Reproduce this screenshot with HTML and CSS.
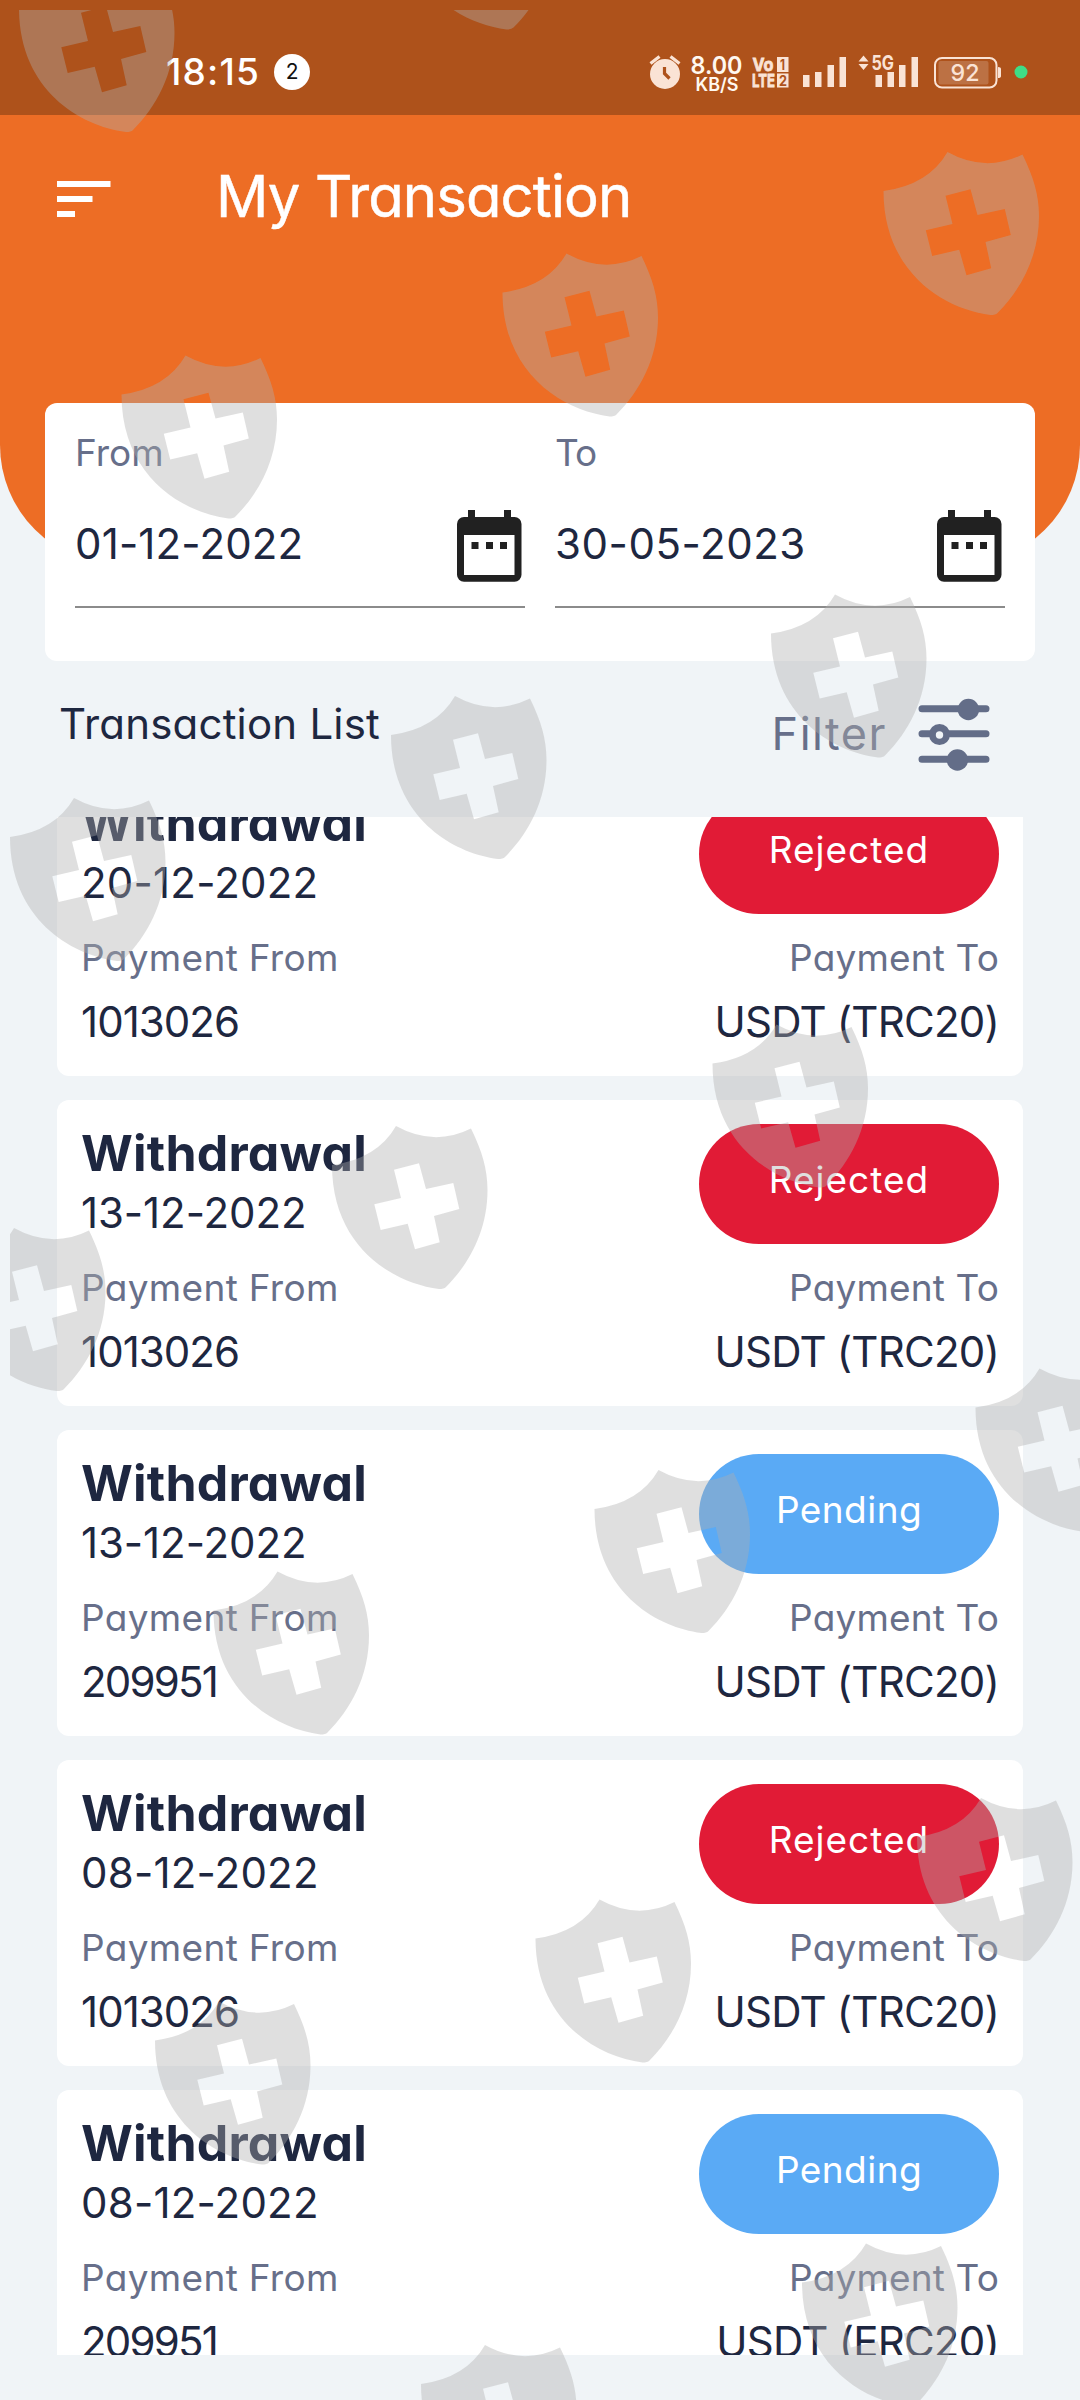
FILE: index.html
```
<!DOCTYPE html>
<html lang="en">
<head>
<meta charset="utf-8">
<title>My Transaction</title>
<link rel="stylesheet" href="styles.css">
</head>
<body>
<div class="screen">
  <header class="hero">
    <div class="status">
      <span class="clock">18:15</span>
      <span class="badge">2</span>
      <svg class="status-icons" width="380" height="60" viewBox="648 42 380 60" fill="#fae3d5">
        <circle cx="665" cy="74" r="15"/>
        <path d="M650.500 63.500l9-7M679.500 63.500l-9-7" stroke="#fae3d5" stroke-width="3.200"/>
        <path d="M664.500 67v6.500l5 5" fill="none" stroke="#ae521b" stroke-width="3.200"/>
        <g fill="#fff8f0" font-weight="600">
          <text x="690.500" y="73.600" font-size="24" textLength="52" lengthAdjust="spacingAndGlyphs">8.00</text>
          <text x="695.500" y="90.500" font-size="18" textLength="43" lengthAdjust="spacingAndGlyphs">KB/S</text>
        </g>
        <g font-weight="700">
          <g stroke="#fae3d5" stroke-width=".8">
            <text x="752.500" y="70.700" font-size="18" textLength="21" lengthAdjust="spacingAndGlyphs">Vo</text>
            <text x="752" y="86.700" font-size="18" textLength="23" lengthAdjust="spacingAndGlyphs">LTE</text>
          </g>
          <path d="M777 57h11.500v15H777zM777 73.500h11.500v14H777z"/>
          <g fill="#ae521b">
            <text x="780" y="69.500" font-size="14" textLength="5" lengthAdjust="spacingAndGlyphs">1</text>
            <text x="779" y="85.500" font-size="14" textLength="8" lengthAdjust="spacingAndGlyphs">2</text>
          </g>
          <text x="871.500" y="69.700" font-size="20" textLength="22.500" lengthAdjust="spacingAndGlyphs">5G</text>
        </g>
        <path d="M803 75h6.500v12H803zM815 72h6.500v15H815zM827.500 65h6.500v22h-6.500zM839.500 57h6.500v30h-6.500z"/>
        <path d="M875.500 75h6.500v12h-6.500zM887.500 72h6.500v15h-6.500zM899 65h6.500v22H899zM911.500 57h6.500v30h-6.500z"/>
        <path d="M863.500 55.500l5 6h-10zM863.500 70l5-6h-10z"/>
        <rect x="938.500" y="61" width="50" height="23.500" rx="2" fill="#fff" fill-opacity=".18"/>
        <rect x="935" y="58" width="61.500" height="29.500" rx="7" fill="none" stroke="#fae3d5" stroke-width="2"/>
        <path d="M998 67q3 0 3 2v7q0 2-3 2z"/>
        <text x="950.500" y="81.300" font-size="23" font-weight="500" textLength="29" lengthAdjust="spacingAndGlyphs">92</text>
        <circle cx="1021" cy="72" r="6.500" fill="#3fdd86"/>
      </svg>
    </div>
    <div class="appbar">
      <svg class="menu" width="54" height="36" viewBox="0 0 54 36" fill="#fff"><path d="M0 0h53.500v6H0zM0 15h35.500v6H0zM0 30h18v6H0z"/></svg>
      <h1 class="title">My Transaction</h1>
    </div>
  </header>

  <section class="range">
    <div class="field">
      <span class="field-label">From</span>
      <div class="field-row">
        <span class="from-date">01-12-2022</span>
        <svg class="calendar" width="65" height="72" viewBox="0 0 65 72"><path fill="#212121" fill-rule="evenodd" d="M11 0h7v7h29V0h7v7h3.500a7 7 0 0 1 7 7v50.700a7 7 0 0 1-7 7H7a7 7 0 0 1-7-7V14a7 7 0 0 1 7-7h4zM7 25v40h50.500V25zM14.500 32h7v7h-7zM29 32h7v7h-7zM43 32h7v7h-7z"/></svg>
      </div>
    </div>
    <div class="field">
      <span class="field-label to">To</span>
      <div class="field-row">
        <span class="to-date">30-05-2023</span>
        <svg class="calendar" width="65" height="72" viewBox="0 0 65 72"><path fill="#212121" fill-rule="evenodd" d="M11 0h7v7h29V0h7v7h3.500a7 7 0 0 1 7 7v50.700a7 7 0 0 1-7 7H7a7 7 0 0 1-7-7V14a7 7 0 0 1 7-7h4zM7 25v40h50.500V25zM14.500 32h7v7h-7zM29 32h7v7h-7zM43 32h7v7h-7z"/></svg>
      </div>
    </div>
  </section>

  <div class="list-head">
    <h2 class="list-title">Transaction List</h2>
    <div class="filter">
      <span>Filter</span>
      <svg width="72" height="76" viewBox="918 696 72 76" fill="#636d88">
        <path d="M922 708.700h64M922 733.700h64M922 759.300h64" stroke="#636d88" stroke-width="7" stroke-linecap="round"/>
        <circle cx="968.400" cy="709.500" r="10.700"/><circle cx="939.500" cy="734.500" r="10.500"/><circle cx="957.400" cy="760" r="10.700"/>
        <circle cx="939.500" cy="735" r="3.700" fill="#f0f4f7"/>
      </svg>
    </div>
  </div>

  <main class="list">
    <article class="card">
      <div class="col"><h3 class="kind">Withdrawal</h3><span class="date">20-12-2022</span><span class="label">Payment From</span><span class="value account">1013026</span></div>
      <div class="col end"><span class="pill rejected">Rejected</span><span class="label">Payment To</span><span class="value method">USDT (TRC20)</span></div>
    </article>
    <article class="card">
      <div class="col"><h3 class="kind">Withdrawal</h3><span class="date tight">13-12-2022</span><span class="label">Payment From</span><span class="value account">1013026</span></div>
      <div class="col end"><span class="pill rejected">Rejected</span><span class="label">Payment To</span><span class="value method">USDT (TRC20)</span></div>
    </article>
    <article class="card">
      <div class="col"><h3 class="kind">Withdrawal</h3><span class="date tight">13-12-2022</span><span class="label">Payment From</span><span class="value account short">209951</span></div>
      <div class="col end"><span class="pill pending">Pending</span><span class="label">Payment To</span><span class="value method">USDT (TRC20)</span></div>
    </article>
    <article class="card">
      <div class="col"><h3 class="kind">Withdrawal</h3><span class="date">08-12-2022</span><span class="label">Payment From</span><span class="value account">1013026</span></div>
      <div class="col end"><span class="pill rejected">Rejected</span><span class="label">Payment To</span><span class="value method">USDT (TRC20)</span></div>
    </article>
    <article class="card">
      <div class="col"><h3 class="kind">Withdrawal</h3><span class="date">08-12-2022</span><span class="label">Payment From</span><span class="value account short">209951</span></div>
      <div class="col end"><span class="pill pending">Pending</span><span class="label">Payment To</span><span class="value method">USDT (ERC20)</span></div>
    </article>
  </main>

  <!-- translucent shield pattern over the whole screen -->
  <svg class="watermark" width="1080" height="2400" viewBox="0 0 1080 2400">
    <defs>
      <clipPath id="area"><path d="M10 10h1070v2390H10z"/></clipPath>
      <path id="shield" fill-rule="evenodd" d="M0 39Q45 33 64 0Q102 21 139 2.500C150 25 155.500 43 155.500 64C155.500 105 137 138 114 161Q112 163 107 163C60 157 0 120 0 39ZM62 43.700L69 72L42.300 78.300L48.700 104L75.700 97.700L83 123.300L107.700 116.300L102 90L127.300 83L121.300 57L94 63L87 37.300Z"/>
    </defs>
    <g clip-path="url(#area)" fill="#aeaeae" fill-opacity=".395">
      <use href="#shield" x="19" y="-31"/>
      <use href="#shield" x="399.500" y="-133.500"/>
      <use href="#shield" x="883.500" y="152"/>
      <use href="#shield" x="502.500" y="253.500"/>
      <use href="#shield" x="121.500" y="355.500"/>
      <use href="#shield" x="771" y="594.500"/>
      <use href="#shield" x="391" y="696"/>
      <use href="#shield" x="10" y="798"/>
      <use href="#shield" x="712.500" y="1024.500"/>
      <use href="#shield" x="332" y="1126"/>
      <use href="#shield" x="-50" y="1228"/>
      <use href="#shield" x="975.500" y="1368.500"/>
      <use href="#shield" x="594.500" y="1470"/>
      <use href="#shield" x="213.500" y="1571.500"/>
      <use href="#shield" x="917" y="1798"/>
      <use href="#shield" x="535.500" y="1899.500"/>
      <use href="#shield" x="155" y="2001.500"/>
      <use href="#shield" x="802" y="2243.500"/>
      <use href="#shield" x="421" y="2345"/>
    </g>
  </svg>
</div>
</body>
</html>
```
FILE: styles.css
```
* { box-sizing: border-box; }

body {
  margin: 0;
  background: #f0f4f7;
  color: #1e2740;
  font-family: Inter, "Open Sans", sans-serif;
  font-feature-settings: "cv11";
}

h1, h2, h3 { margin: 0; font-weight: 400; }
svg { display: block; flex: none; }

.screen {
  position: relative;
  width: 1080px;
  height: 2400px;
  overflow: hidden;
}

/* Orange header */
.hero {
  height: 565px;
  margin-bottom: -162px;
  border-radius: 0 0 120px 120px;
  background: #ed6d25;
  color: #fff;
}

.status {
  display: flex;
  align-items: center;
  height: 115px;
  padding: 29px 52px 0 166px;
  background: #ae521b;
}
.clock {
  font-size: 37px;
  font-weight: 500;
  line-height: 60px;
  letter-spacing: 1.19px;
}
.badge {
  width: 36px;
  height: 36px;
  margin-left: 14px;
  border-radius: 50%;
  background: #fff;
  color: #111;
  font-size: 21px;
  line-height: 36px;
  text-align: center;
}
.status-icons { margin-left: auto; }

.appbar {
  display: flex;
  align-items: center;
  gap: 105px;
  height: 162px;
  padding-left: 57px;
}
.menu { margin-top: 6px; }
.title {
  font-size: 58px;
  line-height: 80px;
  letter-spacing: -.88px;
  -webkit-text-stroke: .5px #fff;
}

/* Date range */
.range {
  position: relative;
  display: grid;
  grid-template-columns: 1fr 1fr;
  gap: 30px;
  height: 258px;
  margin: 0 45px;
  padding: 20px 30px 0;
  border-radius: 12px;
  background: #fff;
}
.field-label {
  display: block;
  color: #676f8a;
  font-size: 37px;
  line-height: 60px;
}
.field-label.to { letter-spacing: -1px; }
.field-row {
  display: flex;
  align-items: center;
  justify-content: space-between;
  height: 125px;
  padding: 0 3px 2px 0;
  border-bottom: 2px solid #8b8b8b;
  font-size: 42px;
}
.from-date { letter-spacing: .15px; }
.to-date { letter-spacing: .55px; }
.calendar { margin-top: 5px; }

/* List heading */
.list-head {
  display: flex;
  justify-content: space-between;
  height: 156px;
  padding: 0 90px 0 59px;
}
.list-title {
  font-size: 42px;
  line-height: 125px;
  letter-spacing: .2px;
}
.filter {
  display: flex;
  align-items: center;
  gap: 31px;
  height: 145px;
  color: #676f8a;
  font-size: 45px;
  letter-spacing: 1.49px;
}

/* Scrolled transaction list */
.list {
  display: flex;
  flex-direction: column;
  gap: 24px;
  height: 1538px;
  padding: 0 57px;
  overflow: hidden;
}
.card {
  display: flex;
  flex: none;
  justify-content: space-between;
  height: 306px;
  padding: 24px 24px 0;
  border-radius: 12px;
  background: #fff;
}
.card:first-child { margin-top: -47px; }
.col {
  display: flex;
  flex-direction: column;
  white-space: nowrap;
}
.end { align-items: flex-end; }
.kind {
  font-size: 50px;
  font-weight: 700;
  line-height: 59px;
  letter-spacing: .2px;
}
.date {
  font-size: 42px;
  line-height: 60px;
  letter-spacing: .2px;
}
.tight { letter-spacing: -.08px; }
.label {
  margin-top: 15px;
  color: #676f8a;
  font-size: 37px;
  line-height: 60px;
  letter-spacing: .32px;
}
.pill + .label {
  margin-top: 14px;
  letter-spacing: .15px;
}
.value {
  font-size: 42px;
  line-height: 68px;
}
.account { letter-spacing: -.95px; }
.short { letter-spacing: -1.8px; }
.method { letter-spacing: -.77px; }
.pill {
  flex: none;
  width: 300px;
  height: 120px;
  border-radius: 60px;
  color: #fff;
  font-size: 37px;
  line-height: 112px;
  text-align: center;
  letter-spacing: 1px;
}
.rejected { background: #e11b36; }
.pending {
  background: #5aaaf5;
  letter-spacing: .45px;
}

.watermark {
  position: absolute;
  inset: 0;
  pointer-events: none;
}
```
